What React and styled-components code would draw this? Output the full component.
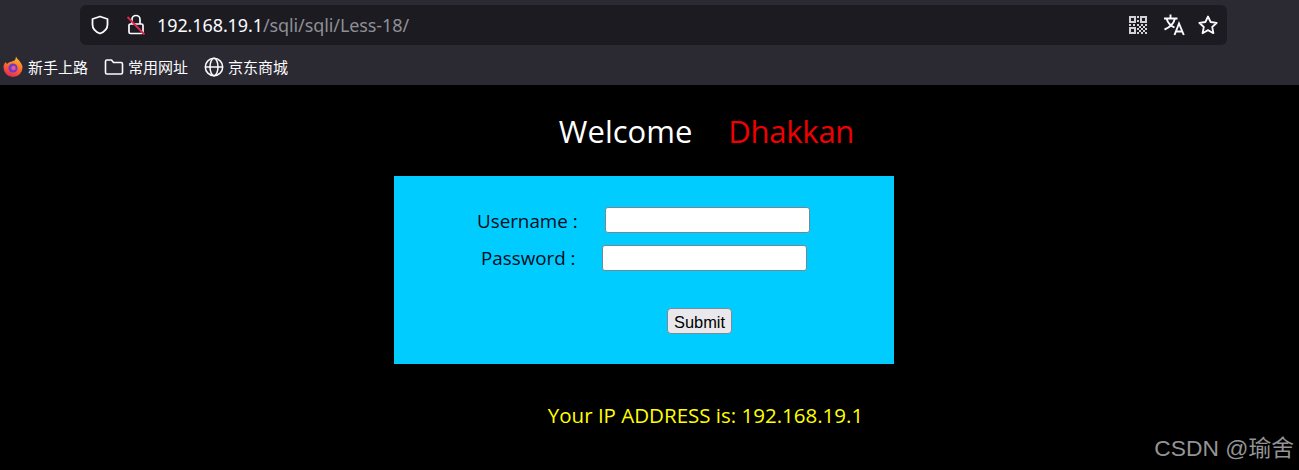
import React from "react";
import styled, { createGlobalStyle } from "styled-components";

const Global = createGlobalStyle`
  html, body { margin: 0; padding: 0; background: #000; }
  body { width: 1299px; height: 470px; overflow: hidden; font-family: "Open Sans", "Noto Sans CJK SC", sans-serif; }
  #root { height: 470px; }
`;
const cjk = `"Noto Sans", "Noto Sans CJK SC", sans-serif`;

const Page = styled.div`display: flex; flex-direction: column; height: 470px; position: relative;`;
const Chrome = styled.header`height: 85px; background: #2b2a33; flex: none;`;
const Toolbar = styled.div`height: 50px; padding: 5px 72px 5px 80px; box-sizing: border-box;`;
const AddressBar = styled.div`
  height: 40px; background: #1c1b22; border-radius: 6px; display: flex; align-items: center; padding: 0 9px 0 10px;
`;
const IconSlot = styled.span`display: flex; width: ${p => p.$w}px; margin-right: ${p => p.$mr || 0}px; flex: none;`;
const Url = styled.div`
  flex: 1; font-size: 18px; letter-spacing: -0.1px; color: #fbfbfe; font-family: "Noto Sans", sans-serif; white-space: nowrap;
  & > span { color: #8f8f94; }
`;
const Bookmarks = styled.nav`height: 35px; display: flex; align-items: flex-start; padding: 4px 0 0 3px; box-sizing: border-box;`;
const Bookmark = styled.div`
  display: flex; align-items: center; gap: ${p => p.$gap}px; margin-right: ${p => p.$mr}px;
  color: #fbfbfe; font: 15px/26px ${cjk}; white-space: nowrap;
`;
const Main = styled.main`flex: 1; display: flex; flex-direction: column; align-items: center; background: #000; padding-top: 24px; box-sizing: border-box;`;
const Heading = styled.h1`
  margin: 0 0 0 114px; height: 67px; font: 400 31px/44px "Open Sans", sans-serif; color: #fff; white-space: nowrap;
  & > span { color: #f00000; margin-left: 36px; letter-spacing: -0.25px; }
`;
const Panel = styled.form`
  width: 500px; height: 188px; background: #00ccff; box-sizing: border-box; padding-top: 31px; margin-right: 11px;
  display: flex; flex-direction: column; color: #000d1a;
`;
const Row = styled.div`display: flex; align-items: flex-start; height: 27px; margin-left: ${p => p.$left}px; margin-bottom: ${p => p.$mb}px;`;
const Label = styled.label`font: 18.8px/${p => p.$lh}px "Open Sans", sans-serif; width: ${p => p.$w}px; flex: none; white-space: nowrap;`;
const Input = styled.input`
  width: 205px; height: 26px; box-sizing: border-box; background: #fff; border: 1px solid #6f8a96; border-radius: 3px; padding: 0; margin: 0; flex: none;
`;
const Submit = styled.button`
  width: 65px; height: 26px; margin: 36px 0 0 273px; box-sizing: border-box; background: #e9e9ed; border: 1px solid #7b8b94; border-radius: 4px;
  padding: 2px 0 0; color: #000; font: 16.4px/22px "Liberation Sans", sans-serif;
`;
const Ip = styled.p`margin: 37px 0 0 112px; font: 20.5px/28px "Open Sans", sans-serif; color: #ffff00; white-space: nowrap;`;
const Watermark = styled.div`position: absolute; right: 5px; bottom: 7px; font: 22.8px/30px "Liberation Sans", "Noto Sans CJK SC", sans-serif; color: #949494; white-space: nowrap;`;

const Shield = () => (
  <svg width="20" height="20" viewBox="0 0 20 20" fill="none" stroke="#fbfbfe" strokeWidth="1.8">
    <path d="M10 1.5 L17.5 4 V9.5 C17.5 14 14 17 10 18.5 C6 17 2.5 14 2.5 9.5 V4 Z" strokeLinejoin="round" />
  </svg>
);
const Lock = () => (
  <svg width="20" height="22" viewBox="0 0 20 22" fill="none">
    <path d="M6 10 V5.5 A4 4 0 0 1 14 5.5 V10 M3 11.5 A1.5 1.5 0 0 1 4.5 10 H15.5 A1.5 1.5 0 0 1 17 11.5 V18 A1.5 1.5 0 0 1 15.5 19.5 H4.5 A1.5 1.5 0 0 1 3 18 Z" stroke="#fbfbfe" strokeWidth="1.7" />
    <path d="M1.5 3 L18.5 20.5" stroke="#e22850" strokeWidth="1.8" />
  </svg>
);
const Qr = () => (
  <svg width="18" height="18" viewBox="0 0 18 18" fill="#d2d2d6" shapeRendering="crispEdges">
    <path fillRule="evenodd" d="M0 0H7V7H0Z M2 2V5H5V2Z M11 0H18V7H11Z M13 2V5H16V2Z M0 11H7V18H0Z M2 13V16H5V13Z" />
    <path d="M8 0H10V2H8Z M8 4H10V6H8Z M0 8H2V10H0Z M4 8H6V10H4Z M8 8H10V10H8Z M12 8H14V10H12Z M16 8H18V10H16Z M8 12H10V14H8Z M8 16H10V18H8Z M10 10H12V12H10Z M14 10H16V12H14Z M12 12H14V14H12Z M16 12H18V14H16Z M10 14H12V16H10Z M14 14H16V16H14Z M12 16H14V18H12Z M16 16H18V18H16Z" />
  </svg>
);
const Translate = () => (
  <svg width="22" height="22" viewBox="0 0 22 22" fill="none" stroke="#fbfbfe" strokeWidth="1.9">
    <path d="M1 4.5 H14.5 M7.5 0.5 V4.5 M12 4.5 C10.5 10 6.5 13.5 1.5 15.5 M3.5 4.5 C5 9.5 8 12 11.5 13.5" />
    <path d="M11.5 21 L16 9.5 L20.8 21 M13 17.5 H19.3" />
  </svg>
);
const Star = () => (
  <svg width="20" height="20" viewBox="0 0 20 20" fill="none" stroke="#fbfbfe" strokeWidth="1.8" strokeLinejoin="round">
    <path d="M10 1.5 L12.6 7 L18.7 7.8 L14.2 12 L15.4 18.2 L10 15.1 L4.6 18.2 L5.8 12 L1.3 7.8 L7.4 7 Z" />
  </svg>
);
const Firefox = () => (
  <svg width="20" height="22" viewBox="0 0 20 22">
    <defs>
      <linearGradient id="ffg" x1="0.7" y1="0" x2="0.3" y2="1">
        <stop offset="0" stopColor="#ffc02e" />
        <stop offset="0.5" stopColor="#ff6a2b" />
        <stop offset="1" stopColor="#e4245e" />
      </linearGradient>
    </defs>
    <path d="M13 0.5 C14 3 16 4 17.5 6.5 C19 8.5 19.5 10 19.5 11.5 A9.5 9.5 0 0 1 0.5 11.5 C0.5 9 1.3 7.5 2.5 6 C3 7 3.5 7.5 4.5 7.8 C6 5.5 10 5.5 11.5 4.5 C12.3 4 12.8 2 13 0.5 Z" fill="url(#ffg)" />
    <circle cx="10" cy="12" r="4.6" fill="#6e3bc4" />
    <circle cx="10.5" cy="12" r="2.2" fill="#e8568c" />
  </svg>
);
const Folder = () => (
  <svg width="20" height="18" viewBox="0 0 20 18" fill="none" stroke="#fbfbfe" strokeWidth="1.6" strokeLinejoin="round">
    <path d="M1.5 3.5 A1.5 1.5 0 0 1 3 2 H7.5 L9.5 4.5 H17 A1.5 1.5 0 0 1 18.5 6 V14.5 A1.5 1.5 0 0 1 17 16 H3 A1.5 1.5 0 0 1 1.5 14.5 Z" />
  </svg>
);
const Globe = () => (
  <svg width="20" height="20" viewBox="0 0 20 20" fill="none" stroke="#fbfbfe" strokeWidth="1.5">
    <circle cx="10" cy="10" r="8.7" />
    <ellipse cx="10" cy="10" rx="4" ry="8.7" />
    <path d="M1.5 10 H18.5" />
  </svg>
);

export default function App() {
  return (
    <Page>
      <Global />
      <Chrome>
        <Toolbar>
          <AddressBar>
            <IconSlot $w={20} $mr={16}><Shield /></IconSlot>
            <IconSlot $w={20} $mr={11}><Lock /></IconSlot>
            <Url>192.168.19.1<span>/sqli/sqli/Less-18/</span></Url>
            <IconSlot $w={18} $mr={16}><Qr /></IconSlot>
            <IconSlot $w={22} $mr={13}><Translate /></IconSlot>
            <IconSlot $w={20}><Star /></IconSlot>
          </AddressBar>
        </Toolbar>
        <Bookmarks>
          <Bookmark $gap={5} $mr={16}><Firefox />新手上路</Bookmark>
          <Bookmark $gap={4} $mr={16}><Folder />常用网址</Bookmark>
          <Bookmark $gap={4} $mr={0}><Globe />京东商城</Bookmark>
        </Bookmarks>
      </Chrome>
      <Main>
        <Heading>Welcome<span>Dhakkan</span></Heading>
        <Panel onSubmit={e => e.preventDefault()}>
          <Row $left={83} $mb={11}>
            <Label $w={128} $lh={28}>Username :</Label>
            <Input type="text" />
          </Row>
          <Row $left={87} $mb={0}>
            <Label $w={121} $lh={26}>Password :</Label>
            <Input type="password" />
          </Row>
          <Submit type="submit">Submit</Submit>
        </Panel>
        <Ip>Your IP ADDRESS is: 192.168.19.1</Ip>
      </Main>
      <Watermark>CSDN @瑜舍</Watermark>
    </Page>
  );
}
